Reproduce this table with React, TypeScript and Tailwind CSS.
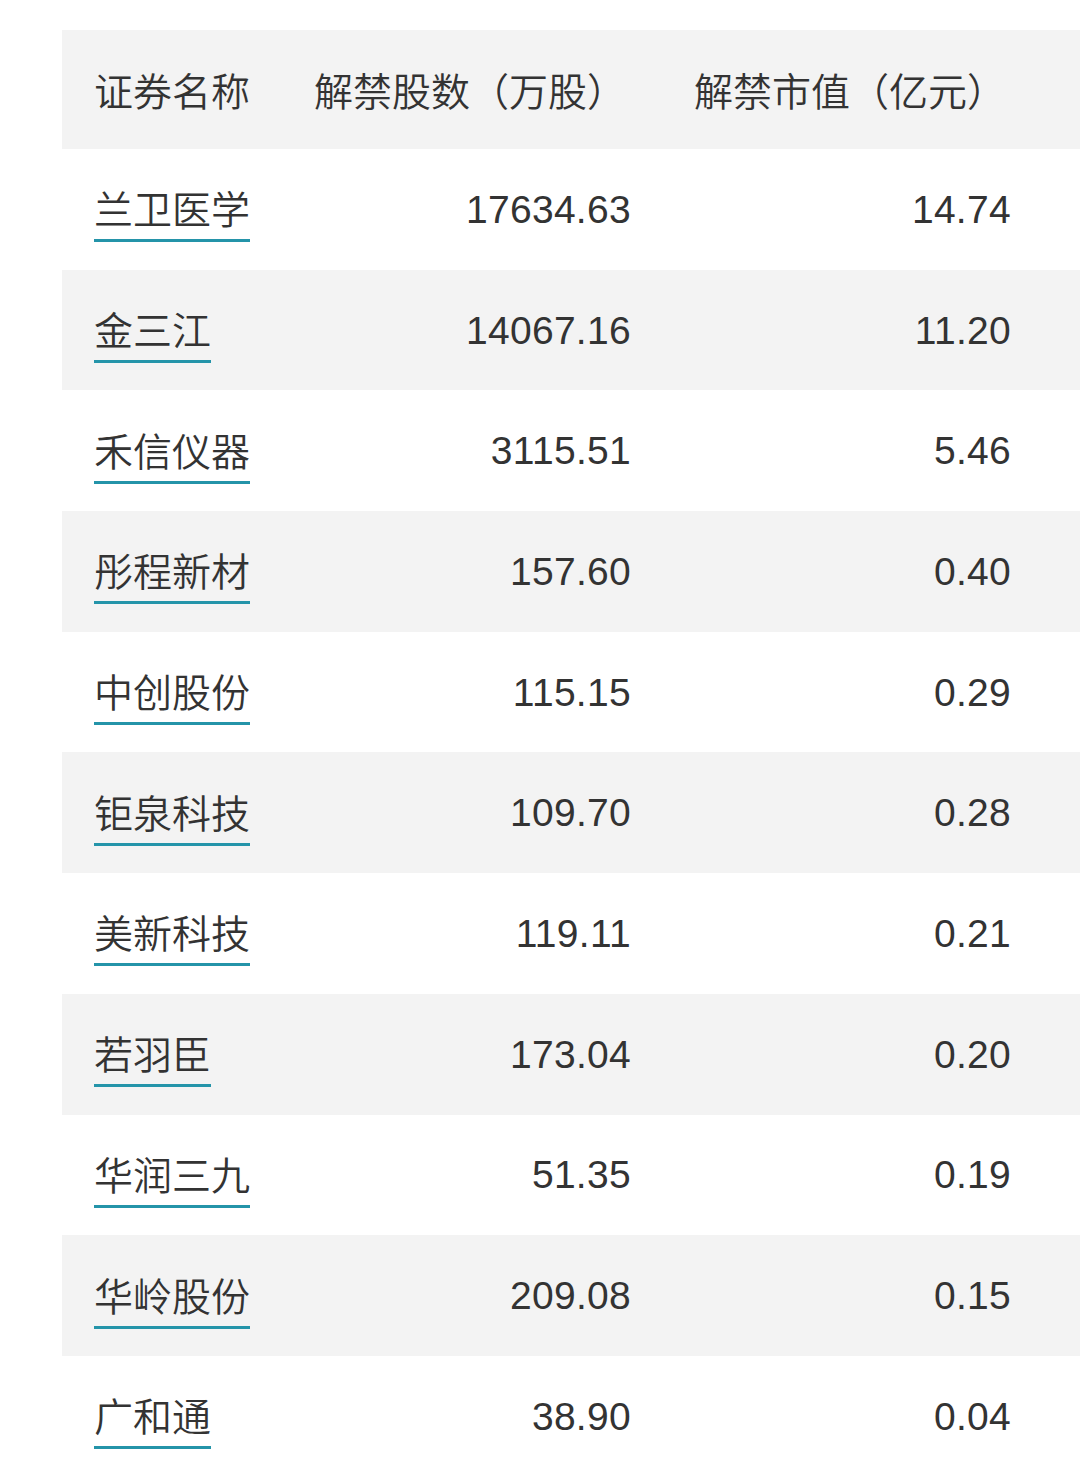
const rows: [string, string, string][] = [
  ['兰卫医学', '17634.63', '14.74'],
  ['金三江', '14067.16', '11.20'],
  ['禾信仪器', '3115.51', '5.46'],
  ['彤程新材', '157.60', '0.40'],
  ['中创股份', '115.15', '0.29'],
  ['钜泉科技', '109.70', '0.28'],
  ['美新科技', '119.11', '0.21'],
  ['若羽臣', '173.04', '0.20'],
  ['华润三九', '51.35', '0.19'],
  ['华岭股份', '209.08', '0.15'],
  ['广和通', '38.90', '0.04'],
];

const numFont = { fontFamily: '"Liberation Sans", sans-serif' };

function App() {
  return (
    <div
      className="min-h-screen bg-white pt-[30px] pl-[62px] overflow-hidden text-[#333333] text-[39px] leading-none font-[350]"
      style={{ fontFamily: '"Noto Sans CJK SC", "Noto Sans", sans-serif' }}
    >
      <div className="w-[1100px]">
        <div className="grid grid-cols-[220px_381px_380px_1fr] h-[119px] items-center bg-[#f3f3f3]">
          <div className="pl-[32px]">证券名称</div>
          <div className="pl-[32px]">解禁股数（万股）</div>
          <div className="pl-[31px]">解禁市值（亿元）</div>
          <div />
        </div>
        {rows.map(([name, shares, value], i) => (
          <div
            key={name}
            className={`grid grid-cols-[220px_381px_380px_1fr] h-[120.7px] items-center ${
              i % 2 === 1 ? 'bg-[#f3f3f3]' : 'bg-white'
            }`}
          >
            <div className="pl-[32px]">
              <span className="inline-block pt-[12px] pb-[12px] border-b-[3px] border-[#2494a9]">{name}</span>
            </div>
            <div className="pr-[32px] text-right tracking-[0.3px] font-normal" style={numFont}>
              {shares}
            </div>
            <div className="pr-[32px] text-right tracking-[0.3px] font-normal" style={numFont}>
              {value}
            </div>
            <div />
          </div>
        ))}
      </div>
    </div>
  );
}

export default App;
